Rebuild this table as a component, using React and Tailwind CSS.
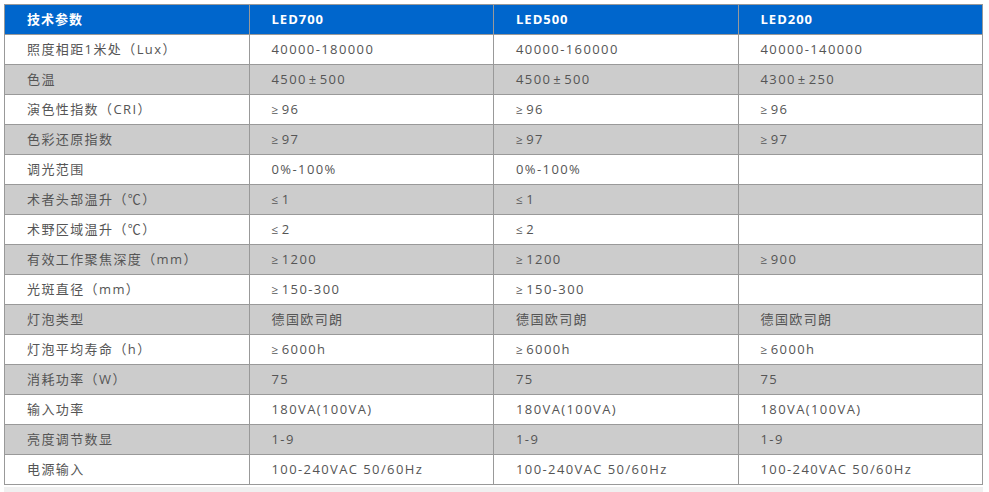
import React from "react";

const rows = [
  ["照度相距1米处（Lux）", "40000-180000", "40000-160000", "40000-140000"],
  ["色温", "4500±500", "4500±500", "4300±250"],
  ["演色性指数（CRI）", "≥96", "≥96", "≥96"],
  ["色彩还原指数", "≥97", "≥97", "≥97"],
  ["调光范围", "0%-100%", "0%-100%", ""],
  ["术者头部温升（℃）", "≤1", "≤1", ""],
  ["术野区域温升（℃）", "≤2", "≤2", ""],
  ["有效工作聚焦深度（mm）", "≥1200", "≥1200", "≥900"],
  ["光斑直径（mm）", "≥150-300", "≥150-300", ""],
  ["灯泡类型", "德国欧司朗", "德国欧司朗", "德国欧司朗"],
  ["灯泡平均寿命（h）", "≥6000h", "≥6000h", "≥6000h"],
  ["消耗功率（W）", "75", "75", "75"],
  ["输入功率", "180VA(100VA)", "180VA(100VA)", "180VA(100VA)"],
  ["亮度调节数显", "1-9", "1-9", "1-9"],
  ["电源输入", "100-240VAC 50/60Hz", "100-240VAC 50/60Hz", "100-240VAC 50/60Hz"],
];

const font = { fontFamily: '"Open Sans", "Noto Sans CJK SC", sans-serif' };

// symbols like ± ≥ ≤ sit with a little air around them in the original
function Cell({ text }) {
  const parts = text.split(/([±≥≤])/);
  return parts.map((p, k) =>
    p === "±" ? (
      <span key={k} className="px-[2px]">±</span>
    ) : p === "≥" || p === "≤" ? (
      <span key={k} className="pr-[2px] text-[12px]">{p}</span>
    ) : (
      <React.Fragment key={k}>{p}</React.Fragment>
    )
  );
}

export default function App() {
  return (
    <div className="bg-white w-[989px] h-[492px] pt-[4px] pl-[4px]" style={font}>
      <table className="border-collapse table-fixed w-[979px] text-[13px] tracking-[1.4px] text-[#555] [text-spacing-trim:space-all]">
        <thead>
          <tr className="bg-[#0066cc] text-white font-bold h-[30px] tracking-[1px]">
            <td className="border border-[#999] pl-[22px] w-1/4">技术参数</td>
            <td className="border border-[#999] pl-[22px] w-1/4">LED700</td>
            <td className="border border-[#999] pl-[22px] w-1/4">LED500</td>
            <td className="border border-[#999] pl-[22px] w-1/4">LED200</td>
          </tr>
        </thead>
        <tbody>
          {rows.map((r, i) => (
            <tr key={i} className={`h-[30px] ${i % 2 === 1 ? "bg-[#cccccc]" : "bg-white"}`}>
              {r.map((c, j) => (
                <td key={j} className="border border-[#999] pl-[22px] whitespace-nowrap">
                  <Cell text={c} />
                </td>
              ))}
            </tr>
          ))}
        </tbody>
      </table>
      <div className="w-[979px] h-[8px] mt-[2px] bg-[#f0f0f0]"></div>
    </div>
  );
}
